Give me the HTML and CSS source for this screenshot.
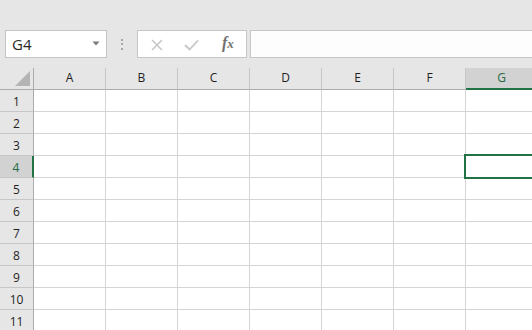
FILE: index.html
```html
<!DOCTYPE html>
<html>
<head>
<meta charset="utf-8">
<link rel="stylesheet" href="styles.css">
</head>
<body>
<div class="app">
  <div class="toolbar">
    <div class="namebox">
      <span class="name">G4</span>
      <svg class="caret" width="8" height="5" viewBox="0 0 8 5"><path d="M0.5 0.5 H7.5 L4 4.5 Z" fill="#7a7a7a"/></svg>
    </div>
    <div class="sep"><span class="dot"></span><span class="dot"></span><span class="dot"></span></div>
    <div class="fxbox">
      <svg class="ic-x" width="12" height="12" viewBox="0 0 12 12"><path d="M1 1 L11 11 M11 1 L1 11" stroke="#c6c6c6" stroke-width="1.5" fill="none"/></svg>
      <svg class="ic-check" width="15" height="12" viewBox="0 0 15 12"><path d="M1 6 L5.5 10.5 L14 1.5" stroke="#c6c6c6" stroke-width="1.8" fill="none"/></svg>
      <span class="fx">f<span class="fxx">x</span></span>
    </div>
    <div class="formula"></div>
  </div>
  <div class="sheet">
    <div class="corner"><svg width="15" height="15" viewBox="0 0 15 15"><path d="M15 0 V15 H0 Z" fill="#b4b4b4"/></svg></div>
    <div class="ch">A</div><div class="ch">B</div><div class="ch">C</div><div class="ch">D</div><div class="ch">E</div><div class="ch">F</div><div class="ch sel">G</div>

    <div class="rh">1</div><div class="c"></div><div class="c"></div><div class="c"></div><div class="c"></div><div class="c"></div><div class="c"></div><div class="c"></div>
    <div class="rh">2</div><div class="c"></div><div class="c"></div><div class="c"></div><div class="c"></div><div class="c"></div><div class="c"></div><div class="c"></div>
    <div class="rh">3</div><div class="c"></div><div class="c"></div><div class="c"></div><div class="c"></div><div class="c"></div><div class="c"></div><div class="c"></div>
    <div class="rh sel">4</div><div class="c"></div><div class="c"></div><div class="c"></div><div class="c"></div><div class="c"></div><div class="c"></div><div class="c active"></div>
    <div class="rh">5</div><div class="c"></div><div class="c"></div><div class="c"></div><div class="c"></div><div class="c"></div><div class="c"></div><div class="c"></div>
    <div class="rh">6</div><div class="c"></div><div class="c"></div><div class="c"></div><div class="c"></div><div class="c"></div><div class="c"></div><div class="c"></div>
    <div class="rh">7</div><div class="c"></div><div class="c"></div><div class="c"></div><div class="c"></div><div class="c"></div><div class="c"></div><div class="c"></div>
    <div class="rh">8</div><div class="c"></div><div class="c"></div><div class="c"></div><div class="c"></div><div class="c"></div><div class="c"></div><div class="c"></div>
    <div class="rh">9</div><div class="c"></div><div class="c"></div><div class="c"></div><div class="c"></div><div class="c"></div><div class="c"></div><div class="c"></div>
    <div class="rh">10</div><div class="c"></div><div class="c"></div><div class="c"></div><div class="c"></div><div class="c"></div><div class="c"></div><div class="c"></div>
    <div class="rh">11</div><div class="c"></div><div class="c"></div><div class="c"></div><div class="c"></div><div class="c"></div><div class="c"></div><div class="c"></div>
  </div>
</div>
</body>
</html>
```

FILE: styles.css
```css
* { box-sizing: border-box; }
html, body { margin: 0; padding: 0; }
body {
  width: 532px;
  height: 330px;
  overflow: hidden;
  background: #e6e6e6;
  font-family: "Open Sans", "Noto Sans", sans-serif;
}
.app { width: 532px; height: 330px; overflow: hidden; }

.toolbar {
  height: 68px;
  padding: 30px 0 0 5px;
  display: flex;
  align-items: flex-start;
  background: #e6e6e6;
}
.namebox {
  width: 102px;
  height: 28px;
  background: #fff;
  border: 1px solid #c6c6c6;
  display: flex;
  align-items: center;
  justify-content: space-between;
  padding: 0 6px 0 6px;
}
.name {
  font-size: 15px;
  color: #262626;
  line-height: 1;
}
.caret { margin-top: -1px; }
.sep {
  width: 30px;
  height: 28px;
  display: flex;
  flex-direction: column;
  align-items: center;
  justify-content: center;
  gap: 2.5px;
}
.dot {
  width: 2px;
  height: 2px;
  background: #a6a6a6;
}
.fxbox {
  width: 110px;
  height: 28px;
  background: #fff;
  border: 1px solid #c6c6c6;
  display: flex;
  align-items: center;
  padding-left: 13px;
}
.ic-x { margin-top: 1px; }
.ic-check { margin-left: 21px; margin-top: 1px; }
.fx {
  margin-left: 23px;
  font-family: "Liberation Serif", "DejaVu Serif", serif;
  font-style: italic;
  font-weight: bold;
  font-size: 16px;
  color: #707070;
  line-height: 1;
  margin-top: -2px;
}
.fxx { font-size: 13px; }
.formula {
  flex: 1;
  height: 28px;
  margin-left: 3px;
  margin-right: -4px;
  background: #fdfdfd;
  border: 1px solid #c6c6c6;
}

.sheet {
  display: grid;
  grid-template-columns: 34px repeat(7, 72px);
  grid-template-rows: 22px repeat(11, 22px);
  background: #fff;
}
.corner {
  background: #e6e6e6;
  border-right: 1px solid #ababab;
  border-bottom: 1px solid #ababab;
  display: flex;
  align-items: flex-end;
  justify-content: flex-end;
  padding: 0 3px 3px 0;
}
.ch {
  background: #e6e6e6;
  border-right: 1px solid #c6c6c6;
  border-bottom: 1px solid #ababab;
  font-size: 12px;
  color: #1f1f1f;
  display: flex;
  align-items: center;
  justify-content: center;
  padding-bottom: 2px;
}
.ch.sel {
  background: #d2d2d2;
  border-bottom: 2px solid #217346;
  color: #1d6b40;
  padding-bottom: 1px;
}
.rh {
  background: #e6e6e6;
  border-right: 1px solid #ababab;
  border-bottom: 1px solid #c6c6c6;
  font-size: 12px;
  color: #1f1f1f;
  display: flex;
  align-items: center;
  justify-content: center;
  padding-top: 2px;
}
.rh.sel {
  background: #d2d2d2;
  border-right: 2px solid #217346;
  color: #1d6b40;
}
.c {
  border-right: 1px solid #d4d4d4;
  border-bottom: 1px solid #d4d4d4;
  background: #fff;
}
.c.active { position: relative; }
.c.active::after {
  content: "";
  position: absolute;
  top: -2px;
  left: -2px;
  right: -2px;
  bottom: -2px;
  border: 2px solid #217346;
}
```
